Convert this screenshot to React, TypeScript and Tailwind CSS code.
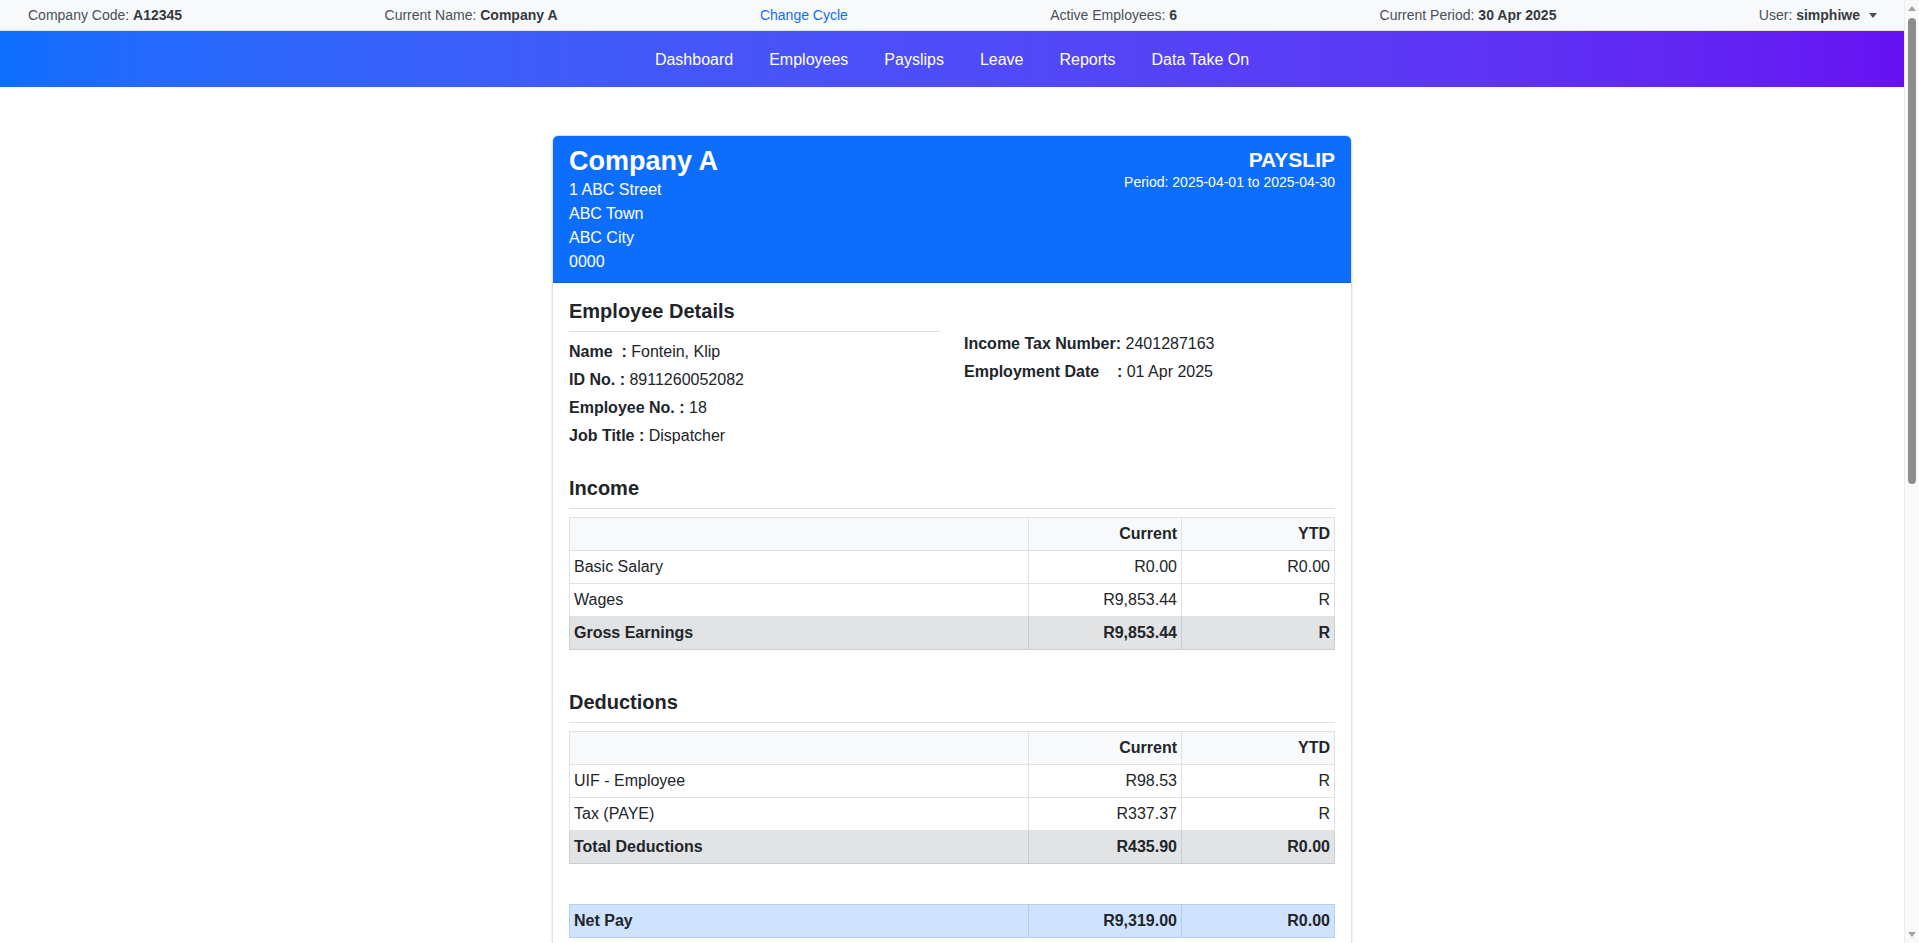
type Row = { label: string; current: string; ytd: string }

const font = { fontFamily: '"Liberation Sans", Arial, sans-serif' }

const links = ['Dashboard', 'Employees', 'Payslips', 'Leave', 'Reports', 'Data Take On']

const income: Row[] = [
  { label: 'Basic Salary', current: 'R0.00', ytd: 'R0.00' },
  { label: 'Wages', current: 'R9,853.44', ytd: 'R' },
]

const deductions: Row[] = [
  { label: 'UIF - Employee', current: 'R98.53', ytd: 'R' },
  { label: 'Tax (PAYE)', current: 'R337.37', ytd: 'R' },
]

const SectionTitle = ({ children }: { children: React.ReactNode }) => (
  <h5 className="text-[20px] leading-[24px] font-bold border-b border-[#dee2e6] pb-2 mb-2">{children}</h5>
)

const AmountTable = ({ rows, total }: { rows: Row[]; total: Row }) => (
  <table className="w-full border-collapse mb-4 text-[16px] leading-[24px]">
    <thead>
      <tr className="bg-[#f8f9fa]">
        <th className="w-[60%] border border-[#dee2e6] p-1"></th>
        <th className="w-[20%] border border-[#dee2e6] p-1 text-right font-bold">Current</th>
        <th className="w-[20%] border border-[#dee2e6] p-1 text-right font-bold">YTD</th>
      </tr>
    </thead>
    <tbody>
      {rows.map((r) => (
        <tr key={r.label}>
          <td className="border border-[#dee2e6] p-1">{r.label}</td>
          <td className="border border-[#dee2e6] p-1 text-right">{r.current}</td>
          <td className="border border-[#dee2e6] p-1 text-right">{r.ytd}</td>
        </tr>
      ))}
      <tr className="bg-[#e2e3e5] font-bold">
        <td className="border border-[#cbccce] p-1">{total.label}</td>
        <td className="border border-[#cbccce] p-1 text-right">{total.current}</td>
        <td className="border border-[#cbccce] p-1 text-right">{total.ytd}</td>
      </tr>
    </tbody>
  </table>
)

const Detail = ({ label, value, gap = '' }: { label: string; value: string; gap?: string }) => (
  <p className="mb-1 text-[16px] leading-[24px] whitespace-pre">
    <span className="font-bold">{label}{gap}:</span> {value}
  </p>
)

// fake window scrollbar, the page in the reference is scrolled to the top
const Scrollbar = () => (
  <div className="w-[15px] h-screen bg-[#f9f9f9] border-l border-[#ececec] flex flex-col items-center pt-[5px] pb-[5px]">
    <svg width="8" height="6" viewBox="0 0 8 6"><path d="M0 6 4 1 8 6z" fill="#a3a3a3" /></svg>
    <div className="mt-[7px] w-[8px] h-[466px] rounded-full bg-[#8d8d8d]" />
    <div className="flex-1" />
    <svg width="8" height="6" viewBox="0 0 8 6"><path d="M0 0 4 5 8 0z" fill="#a3a3a3" /></svg>
  </div>
)

export default function App() {
  return (
    <div className="flex h-screen overflow-hidden bg-white text-[#212529]" style={font}>
      <div className="flex-1 min-w-0 h-screen overflow-hidden">
        {/* top info bar */}
        <div className="h-[31px] bg-[#f8f9fa] border-b border-[#dee2e6] flex items-center justify-between pl-7 pr-[27px] text-[14px] leading-[21px] text-[#495057]">
          <span>Company Code: <b className="text-[#343a40]">A12345</b></span>
          <span>Current Name: <b className="text-[#343a40]">Company A</b></span>
          <a className="text-[#0d6efd]">Change Cycle</a>
          <span>Active Employees: <b className="text-[#343a40]">6</b></span>
          <span>Current Period: <b className="text-[#343a40]">30 Apr 2025</b></span>
          <span className="flex items-center">
            <span>User: <b className="text-[#343a40]">simphiwe</b></span>
            <svg width="8" height="5" viewBox="0 0 8 5" className="ml-[9px]"><path d="M0 0h8L4 5z" fill="#495057" /></svg>
          </span>
        </div>

        {/* nav */}
        <nav className="h-14 pt-[2px] bg-gradient-to-r from-[#0d6efd] to-[#6610f2] flex items-center justify-center gap-[30px]">
          {links.map((l) => (
            <a key={l} className="text-white text-[16px] leading-[24px] px-[3px]">{l}</a>
          ))}
        </nav>

        <div className="w-[800px] mx-auto mt-12">
          <div className="border border-[#dee2e6] rounded-md shadow-sm overflow-hidden">
            <div className="bg-[#0d6efd] text-white px-4 py-2 flex justify-between border-b border-[#0b5ed7]">
              <div>
                <h3 className="text-[27px] leading-[34px] font-bold">Company A</h3>
                <p className="text-[16px] leading-[24px]">1 ABC Street</p>
                <p className="text-[16px] leading-[24px]">ABC Town</p>
                <p className="text-[16px] leading-[24px]">ABC City</p>
                <p className="text-[16px] leading-[24px]">0000</p>
              </div>
              <div className="text-right pt-[3px]">
                <h4 className="text-[21px] leading-[25px] font-bold">PAYSLIP</h4>
                <p className="text-[14px] leading-[20px]">Period: 2025-04-01 to 2025-04-30</p>
              </div>
            </div>

            <div className="p-4 flex flex-col">
              <div className="grid grid-cols-2 gap-6">
                <div>
                  <SectionTitle>Employee Details</SectionTitle>
                  <Detail label="Name" gap="  " value="Fontein, Klip" />
                  <Detail label="ID No. " value="8911260052082" />
                  <Detail label="Employee No. " value="18" />
                  <Detail label="Job Title " value="Dispatcher" />
                </div>
                <div className="pt-[33px]">
                  <Detail label="Income Tax Number" value="2401287163" />
                  <Detail label="Employment Date    " value="01 Apr 2025" />
                </div>
              </div>

              <div className="mt-6">
                <SectionTitle>Income</SectionTitle>
                <AmountTable rows={income} total={{ label: 'Gross Earnings', current: 'R9,853.44', ytd: 'R' }} />
              </div>

              <div className="mt-6">
                <SectionTitle>Deductions</SectionTitle>
                <AmountTable rows={deductions} total={{ label: 'Total Deductions', current: 'R435.90', ytd: 'R0.00' }} />
              </div>

              <table className="w-full border-collapse mt-6 mb-4 text-[16px] leading-[24px]">
                <tbody>
                  <tr className="bg-[#cfe2ff] font-bold">
                    <td className="w-[60%] border border-[#b6cdf0] p-1">Net Pay</td>
                    <td className="w-[20%] border border-[#b6cdf0] p-1 text-right">R9,319.00</td>
                    <td className="w-[20%] border border-[#b6cdf0] p-1 text-right">R0.00</td>
                  </tr>
                </tbody>
              </table>
            </div>
          </div>
        </div>
      </div>
      <Scrollbar />
    </div>
  )
}
